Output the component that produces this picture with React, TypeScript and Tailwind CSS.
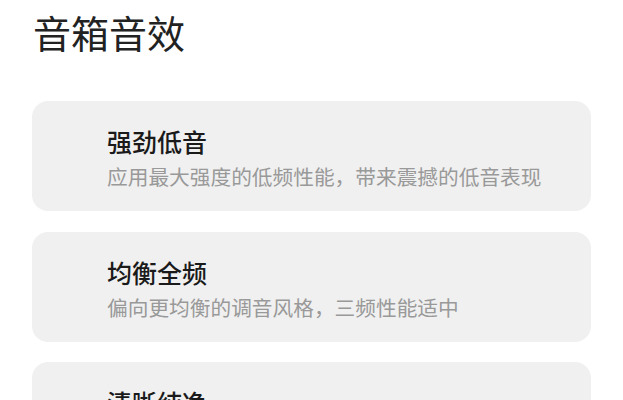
import React from "react";

const items = [
  { title: "强劲低音", desc: "应用最大强度的低频性能，带来震撼的低音表现" },
  { title: "均衡全频", desc: "偏向更均衡的调音风格，三频性能适中" },
  { title: "清晰纯净", desc: "提升人声与高频的清晰度，声音更加通透纯净" },
];

export default function App() {
  return (
    <div
      className="w-[623px] h-[400px] overflow-hidden bg-white px-[32px]"
      style={{ fontFamily: '"Noto Sans CJK SC", "Noto Sans", sans-serif' }}
    >
      <div className="pt-[10px] pl-[1px] text-[38px] leading-[44px] text-[#222222]">音箱音效</div>
      <div className="mt-[47px] flex flex-col gap-[20.5px]">
        {items.map((it) => (
          <div key={it.title} className="h-[110px] shrink-0 rounded-[16px] bg-[#f0f0f0] pl-[75px] pt-[25px]">
            <div className="text-[25px] font-medium leading-[30px] text-[#1a1a1a]">{it.title}</div>
            <div className="mt-[6px] text-[20.7px] leading-[28px] text-[#999999]">{it.desc}</div>
          </div>
        ))}
      </div>
    </div>
  );
}
